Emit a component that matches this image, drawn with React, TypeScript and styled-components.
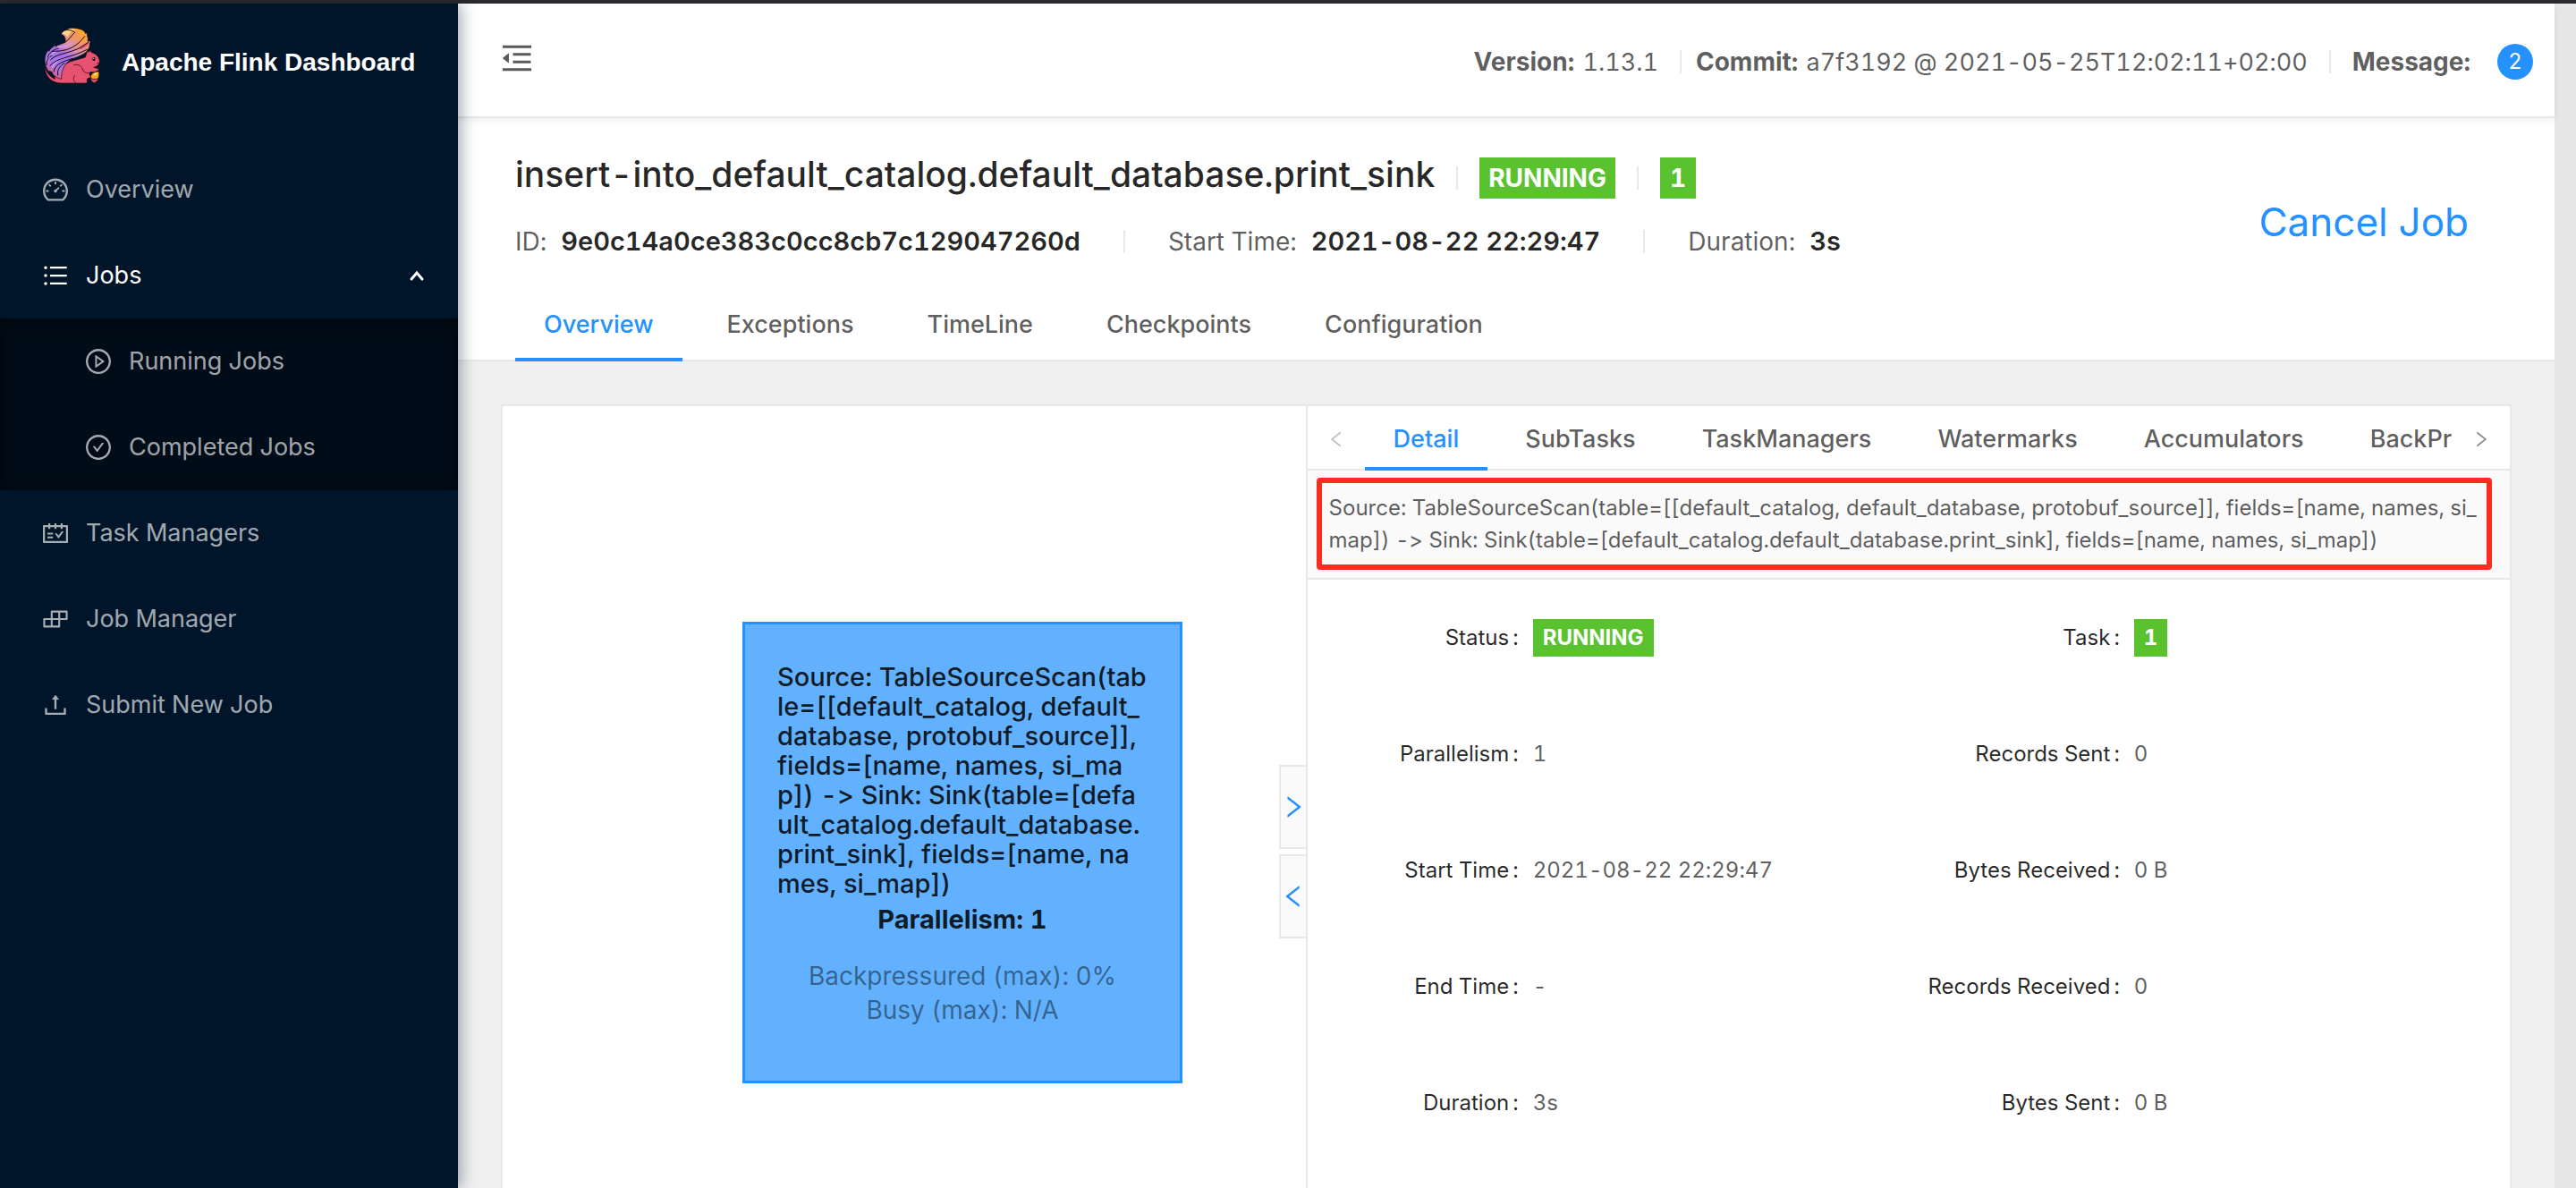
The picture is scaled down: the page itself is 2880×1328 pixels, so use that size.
import React from "react";
import styled, { createGlobalStyle } from "styled-components";
import {
  AiOutlineBars,
  AiOutlineBuild,
  AiOutlineCheckCircle,
  AiOutlineDashboard,
  AiOutlineLeft,
  AiOutlineMenuFold,
  AiOutlinePlayCircle,
  AiOutlineRight,
  AiOutlineSchedule,
  AiOutlineUpload,
} from "react-icons/ai";

const color = {
  navy: "#001529",
  navyDeep: "#000c17",
  blue: "#2491ff",
  nodeFill: "#61b1fe",
  green: "#5ac12f",
  line: "#e8e8e8",
  canvas: "#f0f0f0",
  subtle: "#fafafa",
  heading: "rgba(0, 0, 0, 0.85)",
  text: "rgba(0, 0, 0, 0.65)",
  mark: "#fc2d1f",
};

const GlobalStyle = createGlobalStyle`
  *, *::before, *::after { box-sizing: border-box; }
  body {
    margin: 0;
    background: ${color.canvas};
    color: ${color.text};
    font: 400 28px/40px Inter, "Liberation Sans", sans-serif;
    font-variant-numeric: tabular-nums;
    font-variant-ligatures: no-contextual;
  }
  button { font: inherit; color: inherit; background: none; border: 0; padding: 0; cursor: pointer; }
  a { color: inherit; text-decoration: none; }
  svg { display: block; flex: none; }
`;

const Page = styled.div`
  display: flex;
  min-height: 100vh;
  border-top: 4px solid #2b2a2f;
`;

const Sidebar = styled.aside`
  flex: none;
  width: 512px;
  background: ${color.navy};
  box-shadow: 4px 0 16px rgba(0, 21, 41, 0.35);
  z-index: 2;
`;

const Brand = styled.a`
  display: flex;
  align-items: center;
  gap: 24px;
  height: 128px;
  padding: 0 48px;
  color: #fff;
`;

const BrandMark = styled.span`
  padding-bottom: 12px;
`;

const BrandName = styled.span`
  padding-top: 4px;
  font: 700 28px/40px "Liberation Sans", sans-serif;
  white-space: nowrap;
`;

const Menu = styled.nav`
  display: flex;
  flex-direction: column;
  padding-top: 32px;
  font-size: 27px;
`;

const MenuItem = styled.a<{ $active?: boolean; $nested?: boolean }>`
  display: flex;
  align-items: center;
  gap: 20px;
  height: 96px;
  padding: 0 36px 0 ${(p) => (p.$nested ? 96 : 48)}px;
  color: ${(p) => (p.$active ? "#fff" : "rgba(255, 255, 255, 0.65)")};
`;

const MenuLabel = styled.span`
  flex: 1;
`;

const SubMenu = styled.div`
  background: ${color.navyDeep};
  box-shadow: inset 0 4px 16px rgba(0, 0, 0, 0.45);
`;

const Main = styled.div`
  flex: 1;
  min-width: 0;
  display: flex;
  flex-direction: column;
`;

const ScrollGutter = styled.div`
  flex: none;
  width: 24px;
  background: #e7e7e7;
`;

const TopBar = styled.header`
  display: flex;
  align-items: center;
  justify-content: space-between;
  height: 128px;
  padding: 0 24px 0 48px;
  background: #fff;
  border-bottom: 2px solid ${color.line};
  box-shadow: 0 2px 8px rgba(0, 21, 41, 0.08);
  z-index: 1;
`;

const FoldButton = styled.button`
  padding-bottom: 4px;
`;

const BuildInfo = styled.div`
  display: flex;
  align-items: center;
  padding-top: 4px;
  font-size: 27px;
  white-space: nowrap;
  b {
    margin-right: 2px;
    font-size: 28px;
    font-weight: 700;
  }
`;

const Divider = styled.i<{ $before: number; $after: number }>`
  width: 2px;
  height: 26px;
  margin: 0 ${(p) => p.$after}px 0 ${(p) => p.$before}px;
  background: ${color.line};
`;

const Badge = styled.span`
  min-width: 40px;
  height: 40px;
  margin-left: 28px;
  border-radius: 20px;
  background: ${color.blue};
  color: #fff;
  font-size: 24px;
  text-align: center;
`;

const JobHeader = styled.section`
  background: #fff;
`;

const JobSummary = styled.div`
  display: flex;
  justify-content: space-between;
  align-items: flex-end;
  padding: 40px 96px 30px 64px;
`;

const JobInfo = styled.div`
  display: flex;
  flex-direction: column;
  gap: 24px;
  white-space: nowrap;
`;

const JobTitleRow = styled.div`
  display: flex;
  align-items: center;
  height: 54px;
`;

const JobTitle = styled.h1`
  margin: 0;
  padding-bottom: 8px;
  color: ${color.heading};
  font-size: 39px;
  line-height: 46px;
  font-weight: 500;
`;

const JobMeta = styled.div`
  display: flex;
  align-items: center;
  b {
    margin-left: 16px;
    color: ${color.heading};
    font-size: 29px;
    font-weight: 600;
  }
`;

const Tag = styled.span<{ $small?: boolean }>`
  display: inline-block;
  padding: 0 ${(p) => (p.$small ? 11 : 10)}px;
  background: ${color.green};
  color: #fff;
  font-weight: 700;
  min-width: ${(p) => (p.$small ? 36 : 40)}px;
  text-align: center;
  font-size: ${(p) => (p.$small ? 24 : 28)}px;
  line-height: ${(p) => (p.$small ? 42 : 46)}px;
`;

const CancelButton = styled.button`
  color: ${color.blue};
  font-size: 44px;
  line-height: 84px;
  white-space: nowrap;
`;

const TabBar = styled.div<{ $inset: number; $gap: number; $height: number }>`
  display: flex;
  gap: ${(p) => p.$gap}px;
  height: ${(p) => p.$height}px;
  padding: 0 ${(p) => p.$inset}px;
  font-size: 27px;
  box-shadow: inset 0 -2px ${color.line};
`;

const Tab = styled.button<{ $active?: boolean }>`
  flex: none;
  padding: 2px 32px 0;
  font-weight: 500;
  color: ${(p) => (p.$active ? color.blue : "inherit")};
  box-shadow: ${(p) => (p.$active ? `inset 0 -4px ${color.blue}` : "none")};
`;

const Content = styled.main`
  flex: 1;
  display: flex;
  padding: 48px 48px 0;
`;

const Card = styled.div`
  flex: 1;
  min-width: 0;
  display: grid;
  grid-template-columns: 2fr 3fr;
  background: #fff;
  border: 2px solid ${color.line};
  border-bottom: 0;
`;

const Graph = styled.section`
  position: relative;
  min-width: 0;
  min-height: 780px;
`;

const Node = styled.div`
  position: absolute;
  left: 268px;
  top: 241px;
  width: 492px;
  height: 516px;
  padding: 42px 36px 0;
  background: ${color.nodeFill};
  border: 3px solid ${color.blue};
  color: ${color.heading};
  text-align: center;
`;

const NodeText = styled.p`
  margin: 0;
  font-size: 29px;
  font-weight: 500;
  line-height: 33px;
  text-align: left;
  white-space: nowrap;
`;

const NodeParallelism = styled.p`
  margin: 4px 0 24px;
  font-size: 29px;
  font-weight: 700;
`;

const NodeStat = styled.p`
  margin: 0;
  line-height: 38px;
  color: rgba(0, 0, 0, 0.45);
`;

const Handles = styled.div`
  position: absolute;
  right: 0;
  top: 401px;
  display: flex;
  flex-direction: column;
  gap: 6px;
`;

const Handle = styled.button`
  display: flex;
  align-items: center;
  justify-content: center;
  width: 30px;
  height: 94px;
  background: ${color.subtle};
  border: 2px solid ${color.line};
  border-right: 0;
  color: ${color.blue};
`;

const DetailPanel = styled.section`
  min-width: 0;
  border-left: 2px solid ${color.line};
`;

const TabScroller = styled.div`
  display: flex;
  box-shadow: inset 0 -2px ${color.line};
`;

const TabWindow = styled.div`
  flex: 1;
  min-width: 0;
  overflow: hidden;
`;

const Arrow = styled.button<{ $disabled?: boolean }>`
  flex: none;
  display: flex;
  align-items: center;
  justify-content: center;
  width: 64px;
  padding-top: 2px;
  color: ${(p) => (p.$disabled ? "rgba(0, 0, 0, 0.25)" : "rgba(0, 0, 0, 0.45)")};
`;

const Description = styled.p`
  position: relative;
  margin: 0;
  padding: 24px;
  background: ${color.subtle};
  border-bottom: 2px solid ${color.line};
  font-size: 24px;
  line-height: 36px;
  white-space: nowrap;
`;

const Highlight = styled.span`
  position: absolute;
  inset: 8px 20px 9px 10px;
  border: 6px solid ${color.mark};
  border-radius: 4px;
`;

const Facts = styled.dl`
  display: grid;
  grid-template-columns: 1fr 1fr;
  margin: 0;
  font-size: 24px;
`;

const Fact = styled.div`
  display: grid;
  grid-template-columns: 3fr 5fr;
  align-items: center;
  height: 130px;
`;

const Term = styled.dt`
  display: flex;
  justify-content: flex-end;
  gap: 4px;
  padding-right: 16px;
  color: ${color.heading};
`;

const Value = styled.dd`
  margin: 0;
`;

const antBox = "64 64 896 896";

function SquirrelLogo() {
  return (
    <svg width="64" height="64" viewBox="24 30 192 192" aria-hidden="true">
      <defs>
        <linearGradient id="tail" x1="0.85" y1="0" x2="0.25" y2="1">
          <stop offset="0" stopColor="#f7a63c" />
          <stop offset="0.24" stopColor="#f0946a" />
          <stop offset="0.42" stopColor="#d98fb4" />
          <stop offset="0.58" stopColor="#a46fec" />
          <stop offset="0.8" stopColor="#a877e6" />
          <stop offset="1" stopColor="#d9608f" />
        </linearGradient>
      </defs>
      <path
        fill="#e65270"
        stroke="#16070d"
        strokeWidth="2"
        d="M31 160C29 192 48 219 86 219H171C175 212 168 206 176 203C181 200 187 206 186 197C178 193 178 184 185 181C192 184 206 182 213 172C208 169 200 168 194 166C204 164 215 156 214 144C213 131 202 119 187 116L183 108L178 115L173 110C171 118 168 124 166 132C150 137 130 142 114 147C80 165 60 190 64 205C45 196 34 180 31 160Z"
      />
      <path
        fill="url(#tail)"
        stroke="#16070d"
        strokeWidth="2"
        d="M85 54C96 36 120 30 140 36C155 39 164 43 166 52L172 50C170 60 178 66 174 78L184 78C178 92 184 96 174 108C166 122 146 128 122 138C98 150 86 170 86 205C72 202 58 194 54 182C44 176 46 184 38 172C26 150 28 124 42 108L44 112C50 102 58 96 68 90L66 97C76 88 90 88 98 82C102 72 98 60 85 54Z"
      />
      <path fill="#fbd88b" d="M87 53C98 38 118 35 134 38C120 44 108 54 108 66C103 57 96 53 87 53Z" />
      <path fill="#f9a62f" d="M134 37C152 38 164 46 165 58C170 68 164 82 154 88C157 70 150 50 134 37Z" />
      <path fill="#e0567c" d="M184 79C160 86 150 94 146 106C158 104 172 98 184 79Z" />
      <g fill="none" stroke="#c9a4f7" strokeWidth="4" strokeLinecap="round">
        <path d="M38 148C42 134 52 120 68 112" />
        <path d="M56 166C60 150 76 140 96 134" />
        <path d="M74 98C92 98 110 92 122 84" />
      </g>
      <g fill="none" stroke="#16070d" strokeWidth="3" strokeLinecap="round">
        <path d="M98 82C112 74 118 60 130 50" />
        <path d="M56 112C90 112 130 108 164 62" />
        <path d="M50 140C74 114 130 122 176 82" />
        <path d="M48 160C72 132 120 134 172 106" />
        <path d="M60 180C66 152 94 146 124 136" />
        <path d="M40 132C44 118 58 106 76 102" />
        <path d="M36 158C36 142 44 130 54 126" />
        <path d="M74 192C70 172 84 158 96 152" />
        <path d="M96 42C112 38 124 42 132 50" />
      </g>
      <g fill="none" stroke="#5a1328" strokeWidth="3" strokeLinecap="round">
        <path d="M128 158C146 153 154 164 158 174C162 184 172 186 178 184" />
        <path d="M134 218C124 210 126 200 130 194" />
        <path d="M206 152C210 154 213 151 214 148" />
      </g>
      <ellipse cx="195" cy="138" rx="5" ry="6" fill="#1d0a12" />
      <circle cx="194" cy="136" r="2" fill="#f3d8dd" />
      <path fill="#16070d" d="M184 198L172 204L180 212L190 208Z" />
      <path fill="#d2506b" stroke="#16070d" strokeWidth="2" d="M183 202H210C210 212 200 216 196 219C192 216 184 212 183 202Z" />
      <path fill="#f9a51f" stroke="#16070d" strokeWidth="2" d="M184 202C184 186 194 180 212 180C213 192 213 198 208 204C198 206 190 206 184 202Z" />
      <path fill="#fdd56a" d="M194 188C198 184 204 183 208 184C208 190 202 194 194 194Z" />
    </svg>
  );
}

const jobTabs = ["Overview", "Exceptions", "TimeLine", "Checkpoints", "Configuration"];
const detailTabs = ["Detail", "SubTasks", "TaskManagers", "Watermarks", "Accumulators", "BackPressure"];

const nodeLines = [
  "Source: TableSourceScan(tab",
  "le=[[default_catalog, default_",
  "database, protobuf_source]],",
  "fields=[name, names, si_ma",
  "p]) -> Sink: Sink(table=[defa",
  "ult_catalog.default_database.",
  "print_sink], fields=[name, na",
  "mes, si_map])",
];

const facts: [string, React.ReactNode][] = [
  ["Status", <Tag $small>RUNNING</Tag>],
  ["Task", <Tag $small>1</Tag>],
  ["Parallelism", "1"],
  ["Records Sent", "0"],
  ["Start Time", "2021-08-22 22:29:47"],
  ["Bytes Received", "0 B"],
  ["End Time", "-"],
  ["Records Received", "0"],
  ["Duration", "3s"],
  ["Bytes Sent", "0 B"],
];

export default function App() {
  return (
    <>
      <GlobalStyle />
      <Page>
        <Sidebar>
          <Brand href="#">
            <BrandMark>
              <SquirrelLogo />
            </BrandMark>
            <BrandName>Apache Flink Dashboard</BrandName>
          </Brand>
          <Menu>
            <MenuItem href="#overview">
              <AiOutlineDashboard size={28} viewBox={antBox} />
              <MenuLabel>Overview</MenuLabel>
            </MenuItem>
            <MenuItem href="#jobs" $active>
              <AiOutlineBars size={28} viewBox={antBox} />
              <MenuLabel>Jobs</MenuLabel>
              <svg width="20" height="16" viewBox="0 0 20 16" fill="none" aria-hidden="true">
                <path d="M4 12L10 5L16 12" stroke="#fff" strokeWidth="3" strokeLinecap="round" />
              </svg>
            </MenuItem>
            <SubMenu>
              <MenuItem href="#running" $nested>
                <AiOutlinePlayCircle size={28} viewBox={antBox} />
                <MenuLabel>Running Jobs</MenuLabel>
              </MenuItem>
              <MenuItem href="#completed" $nested>
                <AiOutlineCheckCircle size={28} viewBox={antBox} />
                <MenuLabel>Completed Jobs</MenuLabel>
              </MenuItem>
            </SubMenu>
            <MenuItem href="#task-managers">
              <AiOutlineSchedule size={28} viewBox={antBox} />
              <MenuLabel>Task Managers</MenuLabel>
            </MenuItem>
            <MenuItem href="#job-manager">
              <AiOutlineBuild size={28} viewBox={antBox} />
              <MenuLabel>Job Manager</MenuLabel>
            </MenuItem>
            <MenuItem href="#submit">
              <AiOutlineUpload size={28} viewBox={antBox} />
              <MenuLabel>Submit New Job</MenuLabel>
            </MenuItem>
          </Menu>
        </Sidebar>

        <Main>
          <TopBar>
            <FoldButton aria-label="Collapse menu">
              <AiOutlineMenuFold size={36} viewBox={antBox} />
            </FoldButton>
            <BuildInfo>
              <span><b>Version:</b> 1.13.1</span>
              <Divider $before={24} $after={16} />
              <span><b>Commit:</b> a7f3192 @ 2021-05-25T12:02:11+02:00</span>
              <Divider $before={24} $after={24} />
              <b>Message:</b>
              <Badge>2</Badge>
            </BuildInfo>
          </TopBar>

          <JobHeader>
            <JobSummary>
              <JobInfo>
                <JobTitleRow>
                  <JobTitle>insert-into_default_catalog.default_database.print_sink</JobTitle>
                  <Divider $before={24} $after={24} />
                  <Tag>RUNNING</Tag>
                  <Divider $before={24} $after={24} />
                  <Tag>1</Tag>
                </JobTitleRow>
                <JobMeta>
                  ID: <b>9e0c14a0ce383c0cc8cb7c129047260d</b>
                  <Divider $before={48} $after={48} />
                  Start Time: <b>2021-08-22 22:29:47</b>
                  <Divider $before={48} $after={48} />
                  Duration: <b>3s</b>
                </JobMeta>
              </JobInfo>
              <CancelButton>Cancel Job</CancelButton>
            </JobSummary>
            <TabBar $inset={64} $gap={18} $height={84}>
              {jobTabs.map((label, i) => (
                <Tab key={label} $active={i === 0}>{label}</Tab>
              ))}
            </TabBar>
          </JobHeader>

          <Content>
            <Card>
              <Graph>
                <Node>
                  <NodeText>
                    {nodeLines.map((line) => (
                      <React.Fragment key={line}>{line}<br /></React.Fragment>
                    ))}
                  </NodeText>
                  <NodeParallelism>Parallelism: 1</NodeParallelism>
                  <NodeStat>Backpressured (max): 0%</NodeStat>
                  <NodeStat>Busy (max): N/A</NodeStat>
                </Node>
                <Handles>
                  <Handle aria-label="Expand graph"><AiOutlineRight size={28} viewBox={antBox} /></Handle>
                  <Handle aria-label="Expand details"><AiOutlineLeft size={28} viewBox={antBox} /></Handle>
                </Handles>
              </Graph>

              <DetailPanel>
                <TabScroller>
                  <Arrow aria-label="Previous tabs" $disabled><AiOutlineLeft size={20} viewBox={antBox} /></Arrow>
                  <TabWindow>
                    <TabBar $inset={0} $gap={10} $height={72}>
                      {detailTabs.map((label, i) => (
                        <Tab key={label} $active={i === 0}>{label}</Tab>
                      ))}
                    </TabBar>
                  </TabWindow>
                  <Arrow aria-label="Next tabs"><AiOutlineRight size={20} viewBox={antBox} /></Arrow>
                </TabScroller>
                <Description>
                  Source: TableSourceScan(table=[[default_catalog, default_database, protobuf_source]], fields=[name, names, si_<br />
                  map]) -&gt; Sink: Sink(table=[default_catalog.default_database.print_sink], fields=[name, names, si_map])
                  <Highlight />
                </Description>
                <Facts>
                  {facts.map(([term, value]) => (
                    <Fact key={term}>
                      <Term>{term}<span>:</span></Term>
                      <Value>{value}</Value>
                    </Fact>
                  ))}
                </Facts>
              </DetailPanel>
            </Card>
          </Content>
        </Main>
        <ScrollGutter />
      </Page>
    </>
  );
}
